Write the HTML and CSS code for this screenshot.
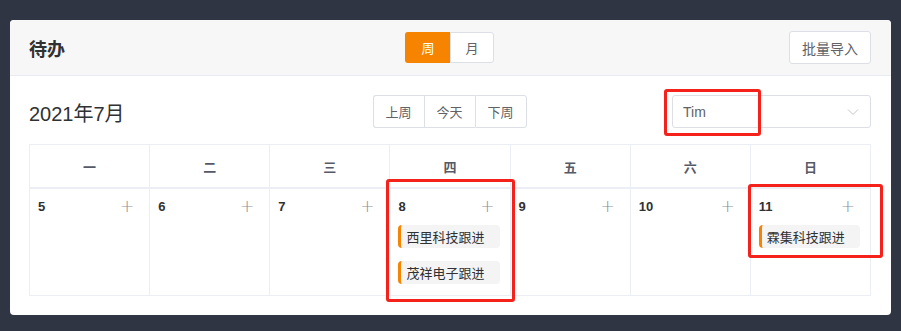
FILE: index.html
```html
<!DOCTYPE html>
<html lang="zh">
<head>
<meta charset="utf-8">
<link rel="stylesheet" href="styles.css">
</head>
<body>
<div class="card">
  <div class="card-header">
    <div class="title">待办</div>
    <div class="seg">
      <button class="seg-btn active">周</button>
      <button class="seg-btn">月</button>
    </div>
    <div class="right"><button class="btn">批量导入</button></div>
  </div>
  <div class="card-body">
    <div class="toolbar">
      <div class="month">2021年7月</div>
      <div class="nav">
        <button class="nav-btn">上周</button>
        <button class="nav-btn">今天</button>
        <button class="nav-btn">下周</button>
      </div>
      <div class="right">
        <div class="select">
          <span class="select-val">Tim</span>
          <svg class="chev" width="12" height="8" viewBox="0 0 12 8"><path d="M1 1.5 L6 6.5 L11 1.5" fill="none" stroke="#c0c4cc" stroke-width="1"/></svg>
        </div>
      </div>
    </div>
    <div class="cal">
      <div class="hcell">一</div>
      <div class="hcell">二</div>
      <div class="hcell">三</div>
      <div class="hcell">四</div>
      <div class="hcell">五</div>
      <div class="hcell">六</div>
      <div class="hcell">日</div>

      <div class="dcell"><div class="dtop"><span class="dnum">5</span><span class="plus">+</span></div></div>
      <div class="dcell"><div class="dtop"><span class="dnum">6</span><span class="plus">+</span></div></div>
      <div class="dcell"><div class="dtop"><span class="dnum">7</span><span class="plus">+</span></div></div>
      <div class="dcell"><div class="dtop"><span class="dnum">8</span><span class="plus">+</span></div>
        <div class="event">西里科技跟进</div>
        <div class="event">茂祥电子跟进</div>
      </div>
      <div class="dcell"><div class="dtop"><span class="dnum">9</span><span class="plus">+</span></div></div>
      <div class="dcell"><div class="dtop"><span class="dnum">10</span><span class="plus">+</span></div></div>
      <div class="dcell"><div class="dtop"><span class="dnum">11</span><span class="plus">+</span></div>
        <div class="event">霖集科技跟进</div>
      </div>
    </div>
  </div>
</div>
<div class="mark mark-tim"></div>
<div class="mark mark-thu"></div>
<div class="mark mark-sun"></div>
</body>
</html>
```

FILE: styles.css
```css
* { box-sizing: border-box; }
html, body { margin: 0; padding: 0; }
body {
  background: #2f3542;
  width: 901px;
  height: 331px;
  overflow: hidden;
  font-family: "Liberation Sans", "Noto Sans CJK SC", sans-serif;
  color: #333;
  position: relative;
  padding-top: 20px;
}
.card {
  margin: 0 10px;
  width: 881px;
  height: 295px;
  background: #fff;
  border-radius: 4px;
  overflow: hidden;
}
.card-header {
  height: 56px;
  background: #f7f7f7;
  border-bottom: 1px solid #e8ebf2;
  display: grid;
  grid-template-columns: 1fr auto 1fr;
  align-items: center;
  padding: 0 20px 0 19px;
}
.title {
  font-family: "Noto Sans CJK SC", sans-serif;
  font-size: 18px;
  font-weight: 700;
  color: #303133;
  padding-top: 1px;
}
.right { display: flex; justify-content: flex-end; }
.seg { display: flex; margin-left: -1px; }
button {
  font-family: "Noto Sans CJK SC", sans-serif;
  cursor: pointer;
}
.seg-btn {
  width: 45px;
  height: 31px;
  font-size: 13px;
  border: 1px solid #dcdfe6;
  background: #fff;
  color: #606266;
  padding: 0;
}
.seg-btn:first-child { border-radius: 3px 0 0 3px; border-right: none; }
.seg-btn:last-child { border-radius: 0 3px 3px 0; width: 44px; }
.seg-btn.active { background: #f78400; border-color: #f78400; color: #fff; }
.btn {
  width: 82px;
  height: 33px;
  font-size: 14px;
  color: #606266;
  background: #fff;
  border: 1px solid #dcdfe6;
  border-radius: 3px;
  padding: 0;
}
.card-body { padding: 19px 20px 20px 19px; }
.toolbar {
  display: grid;
  grid-template-columns: 1fr auto 1fr;
  align-items: center;
  height: 33px;
}
.month { font-size: 20px; color: #303133; padding-top: 2px; }
.nav { display: flex; margin-left: -1px; }
.nav-btn {
  width: 51px;
  height: 33px;
  font-size: 13px;
  color: #606266;
  background: #fff;
  border: 1px solid #dcdfe6;
  border-right: none;
  padding: 0;
}
.nav-btn:first-child { border-radius: 3px 0 0 3px; }
.nav-btn:last-child { border-right: 1px solid #dcdfe6; border-radius: 0 3px 3px 0; width: 52px; }
.select {
  width: 199px;
  height: 33px;
  border: 1px solid #dcdfe6;
  border-radius: 3px;
  display: flex;
  align-items: center;
  justify-content: space-between;
  padding: 0 11px 0 10px;
}
.select-val { font-size: 14px; color: #606266; }
.chev { margin-top: 1px; }
.cal {
  margin-top: 16px;
  display: grid;
  grid-template-columns: repeat(7, 1fr);
  border-top: 1px solid #ebeef5;
  border-left: 1px solid #ebeef5;
}
.hcell {
  height: 44px;
  display: flex;
  align-items: center;
  justify-content: center;
  font-family: "Noto Sans CJK SC", sans-serif;
  font-size: 13px;
  font-weight: 700;
  color: #555a66;
  border-right: 1px solid #ebeef5;
  border-bottom: 2px solid #ebeef5;
}
.dcell {
  height: 107px;
  border-right: 1px solid #ebeef5;
  border-bottom: 1px solid #ebeef5;
  padding: 9px 0 0 8px;
}
.dtop {
  display: flex;
  justify-content: space-between;
  align-items: center;
  height: 16px;
  padding-right: 15px;
}
.dnum { font-size: 13px; font-weight: 700; color: #303133; }
.plus { font-size: 17px; font-weight: 300; color: #8a8f99; line-height: 16px; font-family: "DejaVu Sans", sans-serif; }
.event {
  margin: 13px 10px 0 0;
  height: 23px;
  background: #f4f4f5;
  border-left: 3px solid #f78400;
  border-radius: 4px;
  font-family: "Noto Sans CJK SC", sans-serif;
  font-size: 13px;
  color: #303133;
  line-height: 23px;
  padding-left: 5px;
}
.dtop + .event { margin-top: 11px; }
.mark {
  position: absolute;
  border: 3px solid #f5221b;
  border-radius: 3px;
}
.mark-tim { left: 664px; top: 89px; width: 97px; height: 47px; }
.mark-thu { left: 386px; top: 179px; width: 129px; height: 123px; }
.mark-sun { left: 748px; top: 184px; width: 135px; height: 74px; }
```
